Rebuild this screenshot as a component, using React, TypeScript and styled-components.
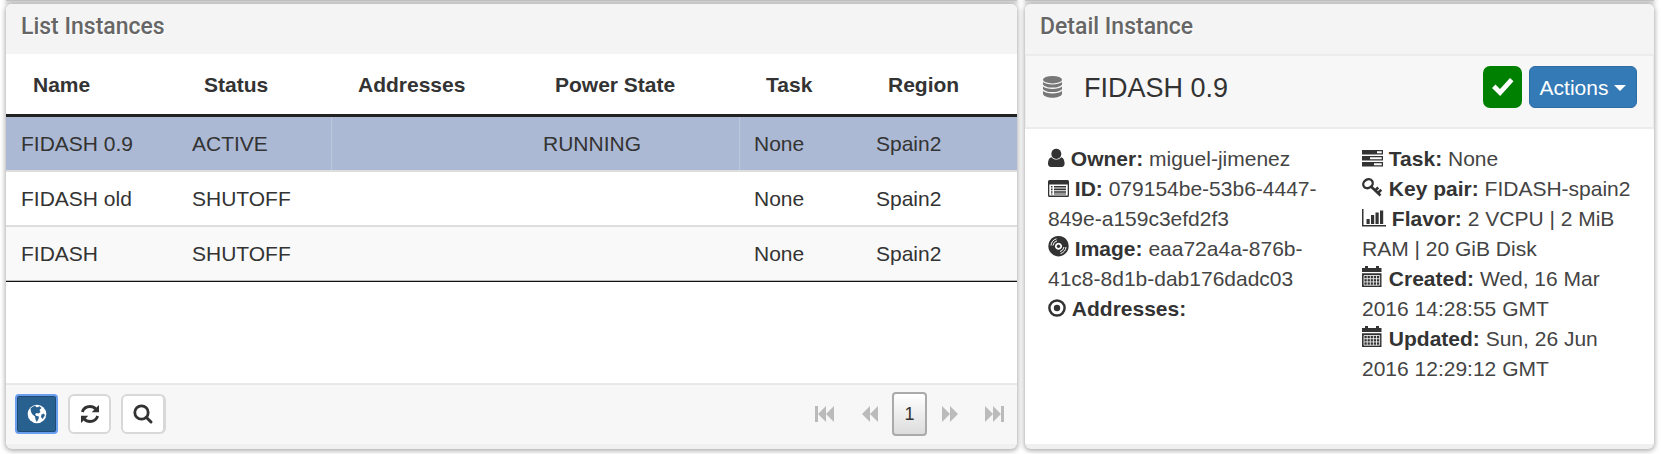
import React from "react";
import styled, { createGlobalStyle, css } from "styled-components";

const GlobalStyle = createGlobalStyle`
  *, *::before, *::after { box-sizing: border-box; }
  body {
    margin: 0;
    overflow: hidden;
    background: #fff;
    color: #333;
    font: 21px/30px "Liberation Sans", Arial, sans-serif;
  }
`;

const Dashboard = styled.main`
  display: grid;
  grid-template-columns: minmax(0, 1011fr) minmax(0, 629fr);
  column-gap: 8px;
  row-gap: 3px;
  padding: 0 7px 5px 6px;
`;

const PanelEdge = styled.div`
  height: 1px;
  background: #c4c4c4;
  box-shadow: 0 1px 4px 1px rgba(0, 0, 0, 0.3);
`;

const Panel = styled.section`
  display: flex;
  flex-direction: column;
  min-height: 445px;
  overflow: hidden;
  border-radius: 6px;
  border-bottom: 5px solid #f0f0f0;
  background: #fff;
  box-shadow: 0 1px 5px 1px rgba(0, 0, 0, 0.32);
`;

const PanelTitle = styled.h2`
  margin: 0;
  height: 50px;
  padding: 8px 15px;
  background: #f4f4f4;
  color: #666;
  font: 500 23px/30px Roboto, "Liberation Sans", sans-serif;
  text-shadow: 1px 1px 0 #fff;
`;

const InstanceTable = styled.table`
  width: 100%;
  table-layout: fixed;
  border-collapse: separate;
  border-spacing: 0;
  border-bottom: 1px solid #111;
  text-align: left;
`;

const HeadCell = styled.th`
  height: 63px;
  padding: 2px 0 0 27px;
  border-bottom: 3px solid #222;
`;

const Row = styled.tr<{ $tone: "selected" | "plain" | "striped" }>`
  background: ${(p) => ({ selected: "#acb9d4", plain: "#fff", striped: "#f9f9f9" })[p.$tone]};
  ${(p) =>
    p.$tone === "selected" &&
    css`
      td:nth-child(3), td:nth-child(5) { box-shadow: inset 1px 0 #bdc8de; }
    `}
`;

const Cell = styled.td`
  height: 55px;
  padding: 0 0 0 15px;
  border-bottom: 2px solid #ddd;
  tr:last-child > & { border-bottom: 1px solid #bbb; height: 54px; }
`;

const Footer = styled.footer`
  display: flex;
  align-items: center;
  justify-content: space-between;
  height: 61px;
  margin-top: auto;
  padding: 0 0 1px 9px;
  border-top: 2px solid #e8e8e8;
  background: #f7f7f7;
`;

const Tools = styled.div`
  display: flex;
  gap: 10px;
`;

const ToolButton = styled.button<{ $active?: boolean; $wideEdge?: boolean }>`
  display: grid;
  place-items: center;
  width: ${(p) => (p.$wideEdge ? 45 : 43)}px;
  height: 40px;
  padding: 0;
  border: 2px solid ${(p) => (p.$active ? "#6a9ff0" : "#d8d8d8")};
  border-right-width: ${(p) => (p.$wideEdge ? 3 : 2)}px;
  border-radius: ${(p) => (p.$active ? 4 : 6)}px;
  background: ${(p) => (p.$active ? "#286090" : "#fff")};
  box-shadow: ${(p) => (p.$active ? "inset 0 0 0 1px #1f4a72" : "none")};
  color: ${(p) => (p.$active ? "#fff" : "#333")};
`;

const Pager = styled.nav`
  display: flex;
  align-items: center;
`;

const PageArrow = styled.button`
  display: grid;
  place-items: center;
  width: 45px;
  height: 40px;
  padding: 0;
  border: 0;
  background: none;
  color: #bbb;
`;

const PageNumber = styled.button`
  width: 35px;
  height: 44px;
  padding: 0;
  border: 2px solid #aaa;
  border-radius: 4px;
  background: linear-gradient(#fff, #dcdcdc);
  color: #333;
  font: 18px/20px "Liberation Sans", Arial, sans-serif;
`;

const DetailBar = styled.header`
  display: flex;
  align-items: center;
  padding: 10px 16px 19px 17px;
  border: 1px solid #ececec;
  border-width: 2px 1px;
  background: #f7f7f7;
`;

const InstanceName = styled.h3`
  flex: 1;
  margin: 0;
  padding: 2px 0 0 22px;
  font: 27px/32px "Liberation Sans", Arial, sans-serif;
`;

const BarButtons = styled.div`
  display: flex;
  gap: 7px;
`;

const StateButton = styled.button`
  display: grid;
  place-items: center;
  width: 39px;
  height: 42px;
  padding: 0;
  border: 0;
  border-radius: 7px;
  background: #008000;
  color: #fff;
`;

const ActionsButton = styled.button`
  display: flex;
  align-items: center;
  justify-content: center;
  gap: 6px;
  width: 108px;
  height: 42px;
  padding: 2px 0 0;
  border: 1px solid #2e6da4;
  border-radius: 6px;
  background: #337ab7;
  color: #fff;
  font: 21px/30px "Liberation Sans", Arial, sans-serif;
`;

const Caret = styled.span`
  border: 6px solid transparent;
  border-top-color: #fff;
  border-bottom: 0;
`;

const Details = styled.div`
  display: grid;
  grid-template-columns: 1fr 1fr;
  gap: 36px;
  padding: 15px 14px 20px 23px;
`;

const FieldList = styled.div`
  color: #444;
`;

const Field = styled.p`
  margin: 0;
  strong { color: #333; }
`;

const Glyph = styled.svg`
  fill: currentColor;
  overflow: visible;
`;

const FieldGlyph = styled(Glyph)`
  color: #333;
  vertical-align: -1px;
`;

const shapes = {
  user: (
    <>
      <ellipse cx="8.300" cy="4.900" rx="5" ry="5.100" />
      <path d="M3.400 8.200C1 8.800 0 11.500 0 14.500C0 16.800 1.200 18 3 18H13.600C15.400 18 16.600 16.800 16.600 14.500C16.600 11.500 15.600 8.800 13.200 8.200C12 9.800 10 10.600 8.300 10.600S4.600 9.800 3.400 8.200Z" />
    </>
  ),
  list: (
    <>
      <path fillRule="evenodd" d="M1.500 0H19.500Q21 0 21 1.500V15.500Q21 17 19.500 17H1.500Q0 17 0 15.500V1.500Q0 0 1.500 0ZM1.300 4.500V15.600H19.700V4.500Z" />
      <path d="M3 6h1.500v1.600H3zM6 6h12v1.600H6zM3 8.600h1.500V10.200H3zM6 8.600h12V10.200H6zM3 11.200h1.500v1.600H3zM6 11.200h12v1.600H6zM3 13.500h1.500v1H3zM6 13.500h12v1H6z" />
    </>
  ),
  disc: (
    <>
      <path fillRule="evenodd" d="M10.500 0a10.200 10.200 0 1 0 .01 0ZM10.500 6.700a3.500 3.500 0 1 1-.01 0Z" />
      <circle cx="10.500" cy="10.200" r="1.700" />
      <path fill="none" stroke="#fff" strokeWidth="1" d="M3 9.500A7.700 7.700 0 0 1 8.500 2.800M5 9.500A5.600 5.600 0 0 1 9 4.800M18 11A7.700 7.700 0 0 1 12.500 17.600M16 11A5.600 5.600 0 0 1 12 15.600" />
    </>
  ),
  target: (
    <>
      <circle cx="9" cy="9" r="7.600" fill="none" stroke="currentColor" strokeWidth="2.500" />
      <circle cx="9" cy="9" r="3.200" />
    </>
  ),
  tasks: (
    <path fillRule="evenodd" d="M0 0H21V4.500H0ZM15 1.300V3.200H19.700V1.300ZM0 6H21V10.500H0ZM8 7.300V9.200H19.700V7.300ZM0 12H21V16.500H0ZM12 13.300V15.200H19.700V13.300Z" />
  ),
  key: (
    <>
      <ellipse cx="6" cy="5.700" rx="5" ry="4.200" transform="rotate(-35 6 5.700)" fill="none" stroke="currentColor" strokeWidth="2.400" />
      <path fill="none" stroke="currentColor" strokeWidth="2.600" d="M8.500 8L18.500 17.500M13 12.500L16.300 9.600M15.800 15L19.300 11.700" />
    </>
  ),
  chart: (
    <path d="M0 0H1.500V16.100H24V17.600H0ZM4.500 10H7.700V15H4.500ZM9 6H12.200V15H9ZM13.500 3.500H16.700V15H13.500ZM18 1.500H21.200V15H18Z" />
  ),
  calendar: (
    <>
      <path d="M3 0H6V2H14V0H17V2H19.500V6H0V2H3ZM0 7.200H19.500V21H0Z" />
      <path fill="none" stroke="#fff" strokeWidth="0.800" d="M2 9.500H17.600M2 12.700H17.600M2 15.900H17.600M2 19.200H17.600M2 9.500V19.200M5.200 9.500V19.200M8.300 9.500V19.200M11.400 9.500V19.200M14.500 9.500V19.200M17.600 9.500V19.200" />
    </>
  ),
};

type Shape = keyof typeof shapes;

const sizes: Record<Shape, [number, number]> = {
  user: [17, 18],
  list: [21, 17],
  disc: [21, 21],
  target: [18, 18],
  tasks: [21, 17],
  key: [21, 19],
  chart: [24, 18],
  calendar: [21, 21],
};

const leftFields: [Shape, string, string][] = [
  ["user", "Owner:", "miguel-jimenez"],
  ["list", "ID:", "079154be-53b6-4447-849e-a159c3efd2f3"],
  ["disc", "Image:", "eaa72a4a-876b-41c8-8d1b-dab176dadc03"],
  ["target", "Addresses:", ""],
];

const rightFields: [Shape, string, string][] = [
  ["tasks", "Task:", "None"],
  ["key", "Key pair:", "FIDASH-spain2"],
  ["chart", "Flavor:", "2 VCPU | 2 MiB RAM | 20 GiB Disk"],
  ["calendar", "Created:", "Wed, 16 Mar 2016 14:28:55 GMT"],
  ["calendar", "Updated:", "Sun, 26 Jun 2016 12:29:12 GMT"],
];

const columns: [string, number][] = [
  ["Name", 171],
  ["Status", 154],
  ["Addresses", 197],
  ["Power State", 211],
  ["Task", 122],
  ["Region", 156],
];

const totalShare = columns.reduce((sum, [, share]) => sum + share, 0);

const instances = [
  { tone: "selected" as const, cells: ["FIDASH 0.9", "ACTIVE", "", "RUNNING", "None", "Spain2"] },
  { tone: "plain" as const, cells: ["FIDASH old", "SHUTOFF", "", "", "None", "Spain2"] },
  { tone: "striped" as const, cells: ["FIDASH", "SHUTOFF", "", "", "None", "Spain2"] },
];

function Fields({ items }: { items: [Shape, string, string][] }) {
  return (
    <FieldList>
      {items.map(([shape, label, value]) => {
        const [w, h] = sizes[shape];
        return (
          <Field key={label}>
            <FieldGlyph width={w} height={h} viewBox={`0 0 ${w} ${h}`} aria-hidden="true">
              {shapes[shape]}
            </FieldGlyph>{" "}
            <strong>{label}</strong> {value}
          </Field>
        );
      })}
    </FieldList>
  );
}

export default function App() {
  return (
    <>
      <GlobalStyle />
      <Dashboard>
        <PanelEdge />
        <PanelEdge />
        <Panel>
          <PanelTitle>List Instances</PanelTitle>
          <InstanceTable>
            <colgroup>
              {columns.map(([name, share]) => (
                <col key={name} style={{ width: `${(share / totalShare) * 100}%` }} />
              ))}
            </colgroup>
            <thead>
              <tr>
                {columns.map(([name]) => (
                  <HeadCell key={name} scope="col">{name}</HeadCell>
                ))}
              </tr>
            </thead>
            <tbody>
              {instances.map((row) => (
                <Row key={row.cells[0]} $tone={row.tone}>
                  {row.cells.map((text, i) => (
                    <Cell key={columns[i][0]}>{text}</Cell>
                  ))}
                </Row>
              ))}
            </tbody>
          </InstanceTable>
          <Footer>
            <Tools>
              <ToolButton $active aria-label="Regions">
                <Glyph width="20" height="20" viewBox="0 0 20 20">
                  <circle cx="10" cy="10" r="9.300" />
                  <path fill="#286090" d="M3.500 4.500C5 2.800 7 1.800 9 1.700L8.500 3L11 3.300L12.500 2.300L14.500 4L12.500 6L13.500 8L11.500 9.500L9.500 9L8 10.500L9.500 12L12 12.500L11.500 15L9.800 18L8.500 15.500L8 12.500L5.500 10.500L4 8ZM14.500 10.500L17 9.500L17.800 11.500L15.500 15L14 13Z" />
                </Glyph>
              </ToolButton>
              <ToolButton aria-label="Refresh">
                <Glyph width="20" height="20" viewBox="0 0 20 20">
                  <path fill="none" stroke="currentColor" strokeWidth="2.800" d="M2.300 8C3.500 4.500 6.500 2.500 10 2.500C12.500 2.500 14.500 3.500 16 5.200M17.700 12C16.500 15.500 13.500 17.500 10 17.500C7.500 17.500 5.500 16.500 4 14.800" />
                  <path d="M19 1V8.300H11.700ZM1 19V11.700H8.300Z" />
                </Glyph>
              </ToolButton>
              <ToolButton $wideEdge aria-label="Search">
                <Glyph width="20" height="20" viewBox="0 0 20 20">
                  <circle cx="8.500" cy="8.500" r="6.700" fill="none" stroke="currentColor" strokeWidth="2.800" />
                  <path stroke="currentColor" strokeWidth="3" strokeLinecap="round" d="M13.500 13.500L18 18" />
                </Glyph>
              </ToolButton>
            </Tools>
            <Pager aria-label="Pages">
              <PageArrow aria-label="First page">
                <Glyph width="19" height="16" viewBox="0 0 19 16"><path d="M0 0H3V16H0ZM11 0V16L3 8ZM19 0V16L11 8Z" /></Glyph>
              </PageArrow>
              <PageArrow aria-label="Previous page">
                <Glyph width="16" height="16" viewBox="0 0 16 16"><path d="M8 0V16L0 8ZM16 0V16L8 8Z" /></Glyph>
              </PageArrow>
              <PageNumber aria-current="page">1</PageNumber>
              <PageArrow aria-label="Next page">
                <Glyph width="16" height="16" viewBox="0 0 16 16"><path d="M0 0V16L8 8ZM8 0V16L16 8Z" /></Glyph>
              </PageArrow>
              <PageArrow aria-label="Last page">
                <Glyph width="19" height="16" viewBox="0 0 19 16"><path d="M0 0V16L8 8ZM8 0V16L16 8ZM16 0H19V16H16Z" /></Glyph>
              </PageArrow>
            </Pager>
          </Footer>
        </Panel>
        <Panel>
          <PanelTitle>Detail Instance</PanelTitle>
          <DetailBar>
            <Glyph width="19" height="22" viewBox="0 0 19 22" color="#777" aria-hidden="true">
              <ellipse cx="9.500" cy="3.700" rx="9.500" ry="3.700" />
              <path d="M0 6C3 9.300 16 9.300 19 6V8.500C17 12.600 2 12.600 0 8.500ZM0 10.500C3 13.800 16 13.800 19 10.500V13C17 17.100 2 17.100 0 13ZM0 15C3 18.300 16 18.300 19 15V18C17 23 2 23 0 18Z" />
            </Glyph>
            <InstanceName>FIDASH 0.9</InstanceName>
            <BarButtons>
              <StateButton aria-label="Instance is active">
                <Glyph width="22" height="18" viewBox="0 0 22 18"><path d="M0 10L3.500 6.500L8 11L18 0L21.500 3.300L8.200 18Z" /></Glyph>
              </StateButton>
              <ActionsButton aria-haspopup="menu">
                Actions <Caret />
              </ActionsButton>
            </BarButtons>
          </DetailBar>
          <Details>
            <Fields items={leftFields} />
            <Fields items={rightFields} />
          </Details>
        </Panel>
      </Dashboard>
    </>
  );
}
